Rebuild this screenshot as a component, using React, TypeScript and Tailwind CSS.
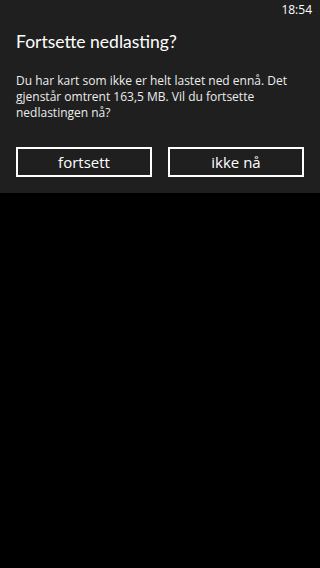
export default function App() {
  return (
    <div className="w-[320px] h-[568px] bg-black text-white" style={{ fontFamily: '"Open Sans", "Noto Sans", sans-serif' }}>
      <div className="bg-[#1f1f1f] pb-[16px]">
        <div className="h-[20px] flex justify-end items-center pr-[8px] text-[12px] leading-none">18:54</div>
        <div className="px-[16px]">
          <h1 className="mt-[10px] text-[17.5px] leading-[24px] font-normal" style={{ fontFamily: 'Lato, "Open Sans", sans-serif' }}>Fortsette nedlasting?</h1>
          <p className="mt-[19px] text-[12px] leading-[16px] text-[#ececec]">
            Du har kart som ikke er helt lastet ned ennå. Det gjenstår omtrent 163,5 MB. Vil du fortsette nedlastingen nå?
          </p>
          <div className="mt-[26px] flex gap-[16px]">
            <button className="flex-1 h-[30px] border-2 border-white text-[15px] font-normal leading-none">fortsett</button>
            <button className="flex-1 h-[30px] border-2 border-white text-[15px] font-normal leading-none">ikke nå</button>
          </div>
        </div>
      </div>
    </div>
  );
}
